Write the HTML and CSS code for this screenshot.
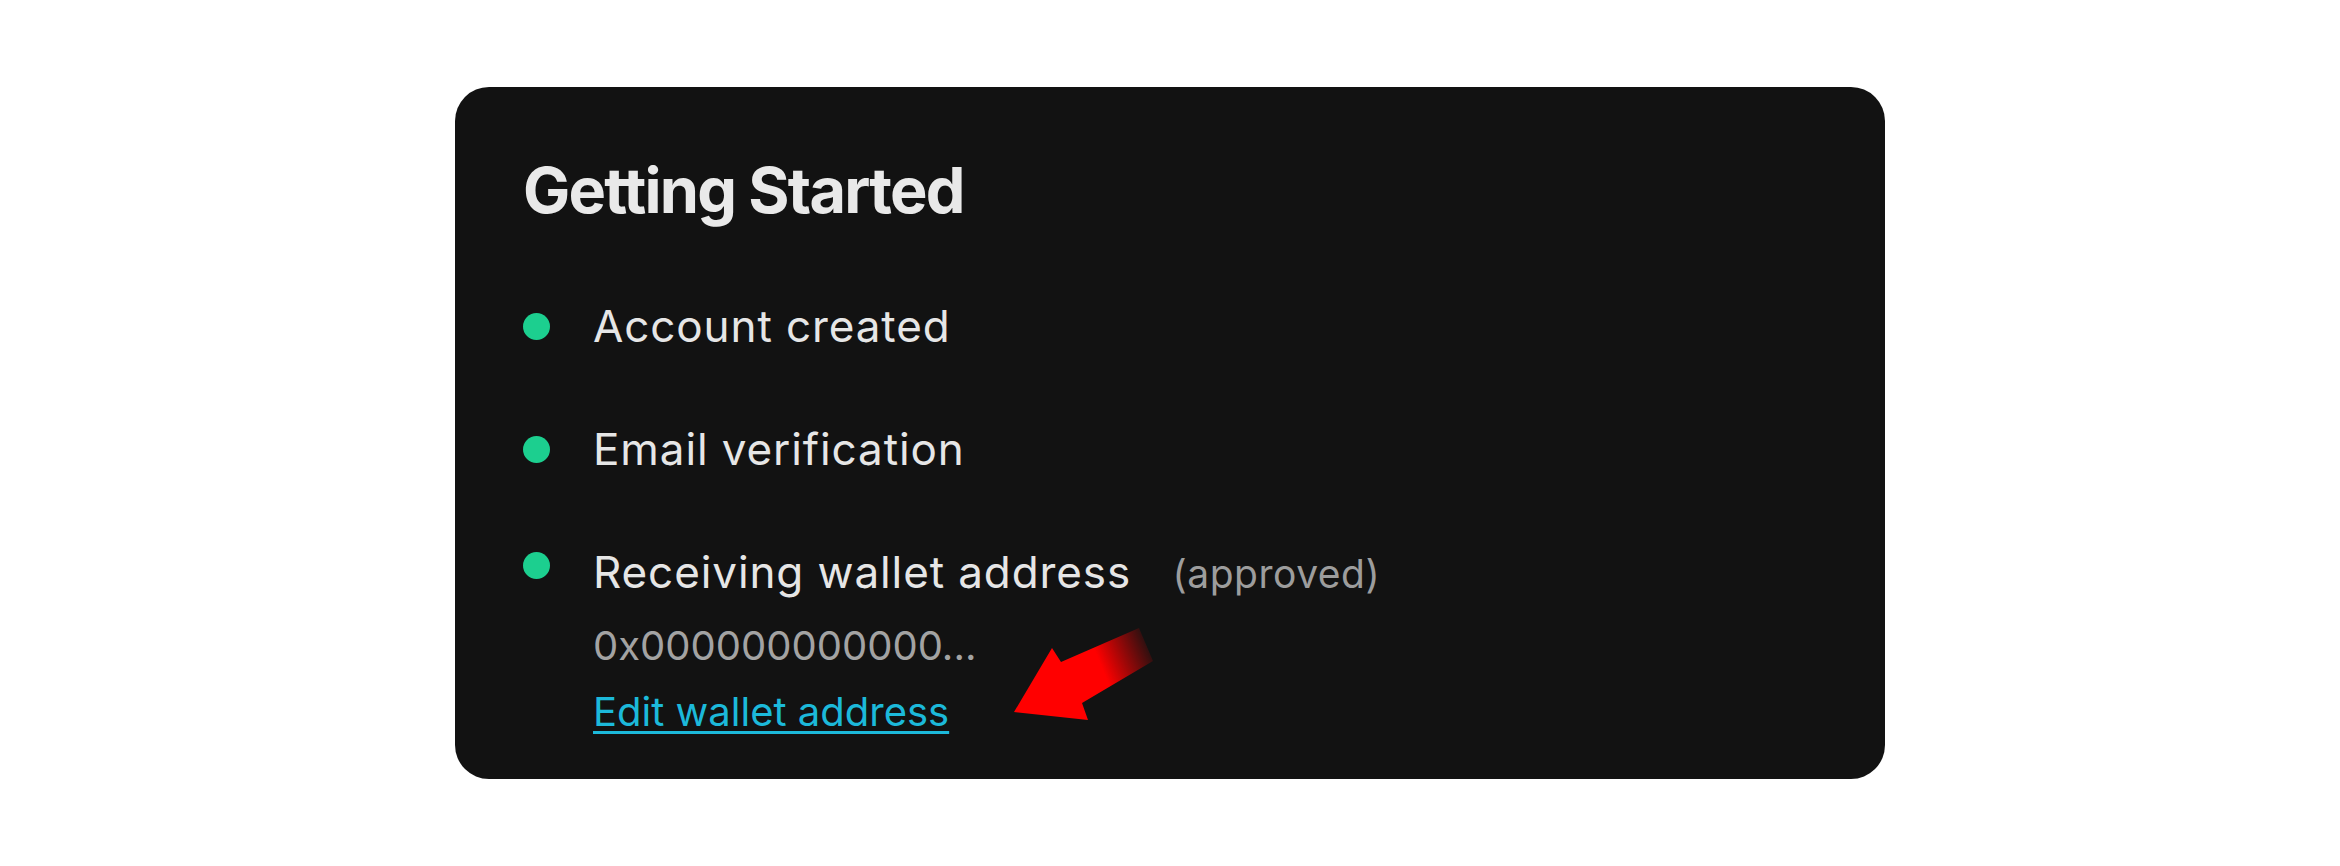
FILE: index.html
```html
<!DOCTYPE html>
<html lang="en">

<head>
  <meta charset="UTF-8">
  <meta name="viewport" content="width=device-width, initial-scale=1.0">
  <link rel="stylesheet" href="styles.css">
  <title>Getting Started</title>
</head>

<body>
  <div class="card">
    <h2 class="title">Getting Started</h2>
    <ul class="steps">
      <li class="step">
        <span class="dot"></span>
        <div class="step-body">
          <span class="label">Account created</span>
        </div>
      </li>
      <li class="step">
        <span class="dot"></span>
        <div class="step-body">
          <span class="label">Email verification</span>
        </div>
      </li>
      <li class="step step-wallet">
        <span class="dot"></span>
        <div class="step-body">
          <div class="label-line">
            <span class="label">Receiving wallet address</span>
            <span class="status">(approved)</span>
          </div>
          <div class="address">0x000000000000...</div>
          <a href="#" class="edit-link">Edit wallet address</a>
        </div>
      </li>
    </ul>

    <!-- red pointer arrow -->
    <svg class="pointer" width="160" height="115" viewBox="0 0 160 115">
      <defs>
        <linearGradient id="fade" gradientUnits="userSpaceOnUse" x1="95" y1="46" x2="148" y2="24">
          <stop offset="0" stop-color="#ff0000" stop-opacity="1" />
          <stop offset="1" stop-color="#ff0000" stop-opacity="0" />
        </linearGradient>
      </defs>
      <polygon points="9,95 47,31 56,45 134,11 148,44 77,86 83,103" fill="url(#fade)" />
    </svg>
  </div>
</body>

</html>
```

FILE: styles.css
```css
body {
  margin: 0;
  background-color: #fff;
  font-family: 'Inter', 'Liberation Sans', sans-serif;
}

.card {
  position: relative;
  box-sizing: border-box;
  width: 1430px;
  height: 692px;
  margin: 87px 0 0 455px;
  padding: 72px 68px 0;
  background-color: #121212;
  border-radius: 34px;
  color: #e9e9e9;
}

.title {
  margin: 0;
  font-size: 63px;
  line-height: 63px;
  font-weight: 700;
  letter-spacing: -1.8px;
}

.steps {
  list-style: none;
  margin: 78px 0 0;
  padding: 0;
  display: flex;
  flex-direction: column;
  gap: 70px;
}

.step {
  display: flex;
  align-items: flex-start;
}

.dot {
  flex: none;
  width: 27px;
  height: 27px;
  margin-top: 13px;
  margin-right: 43px;
  border-radius: 50%;
  background-color: #1ccf8f;
}

.step-wallet .dot {
  margin-top: 6px;
}

.label {
  font-size: 44px;
  line-height: 53px;
  letter-spacing: 0.9px;
  color: #e6e6e6;
}

.status {
  margin-left: 37px;
  font-size: 39px;
  letter-spacing: 0.5px;
  color: #9d9d9d;
}

.address {
  margin-top: 23px;
  font-size: 40px;
  line-height: 48px;
  color: #a3a3a3;
}

.edit-link {
  display: inline-block;
  margin-top: 18px;
  font-size: 40px;
  line-height: 48px;
  color: #1cb9da;
  text-decoration: underline;
  text-decoration-thickness: 3px;
  text-underline-offset: 5px;
}

.pointer {
  position: absolute;
  left: 550px;
  top: 530px;
}
```
